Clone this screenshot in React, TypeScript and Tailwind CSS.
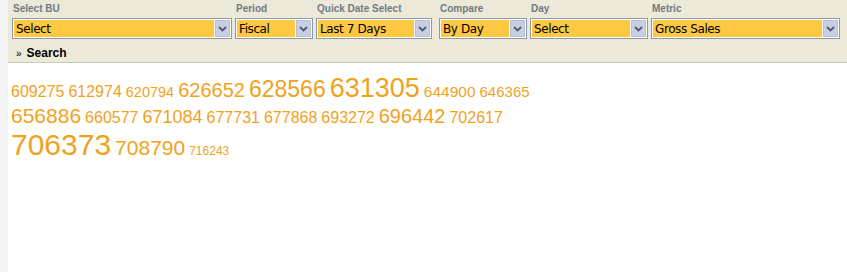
import React from "react";

type Field = { label: string; value: string; width: string; gap: string };

const fields: Field[] = [
  { label: "Select BU", value: "Select", width: "w-[220px]", gap: "ml-[4px]" },
  { label: "Period", value: "Fiscal", width: "w-[78px]", gap: "ml-[3px]" },
  { label: "Quick Date Select", value: "Last 7 Days", width: "w-[116px]", gap: "ml-[3px]" },
  { label: "Compare", value: "By Day", width: "w-[88px]", gap: "ml-[7px]" },
  { label: "Day", value: "Select", width: "w-[118px]", gap: "ml-[3px]" },
  { label: "Metric", value: "Gross Sales", width: "w-[189px]", gap: "ml-[3px]" },
];

const cloud: [string, string][][] = [
  [
    ["609275", "text-[16px]"],
    ["612974", "text-[16px]"],
    ["620794", "text-[14.5px]"],
    ["626652", "text-[20px]"],
    ["628566", "text-[23px]"],
    ["631305", "text-[27px]"],
    ["644900", "text-[15.5px]"],
    ["646365", "text-[15px]"],
  ],
  [
    ["656886", "text-[21px]"],
    ["660577", "text-[16px]"],
    ["671084", "text-[18px]"],
    ["677731", "text-[16px]"],
    ["677868", "text-[16px]"],
    ["693272", "text-[16px]"],
    ["696442", "text-[20px]"],
    ["702617", "text-[16px]"],
  ],
  [
    ["706373", "text-[30px]"],
    ["708790", "text-[21px]"],
    ["716243", "text-[12px]"],
  ],
];

function Chevron() {
  return (
    <svg width="9" height="6" viewBox="0 0 9 6">
      <path d="M1 1 L4.5 4.5 L8 1" fill="none" stroke="#4a5a78" strokeWidth="1.8" />
    </svg>
  );
}

function Combo({ value }: { value: string }) {
  return (
    <div className="flex h-[21px] border border-[#8e9aa8] bg-white p-[1px]">
      <div className="flex flex-1 items-center bg-[#ffc843] pl-[2px] text-[12px] leading-none tracking-[-0.4px] text-black [font-family:'DejaVu_Sans',sans-serif]">
        {value}
      </div>
      <div className="ml-[1px] flex w-[15px] items-center justify-center border border-[#b7bfd6] bg-[#c9cee2]">
        <Chevron />
      </div>
    </div>
  );
}

export default function App() {
  return (
    <div className="flex h-[272px] w-[847px] bg-[#f4f4f4]">
      <div className="w-[8px] shrink-0" />
      <div className="flex flex-1 flex-col">
        <div className="h-[63px] border-b border-[#c9c7bb] bg-[#ece9d8] pl-[4px] pt-[3px]">
          <div className="flex">
            {fields.map((f, i) => (
              <div key={f.label} className={`${f.width} ${i === 0 ? "" : f.gap} flex flex-col`}>
                <div className="h-[15px] pl-[1px] text-[10px] font-bold leading-[12px] text-[#707a86] [font-family:'Liberation_Sans',Arial,sans-serif]">
                  {f.label}
                </div>
                <Combo value={f.value} />
              </div>
            ))}
          </div>
          <div className="mt-[5px] flex items-center pl-[4px] [font-family:'Liberation_Sans',Arial,sans-serif]">
            <span className="mr-[5px] text-[10px] text-black">»</span>
            <span className="text-[12px] font-bold text-black">Search</span>
          </div>
        </div>
        <div className="flex-1 bg-white pl-[3px] pt-[10px] text-[#f0a21e] [font-family:'Liberation_Sans',Arial,sans-serif]">
          {cloud.map((row, r) => (
            <div key={r} className="leading-[1.15]">
              {row.map(([n, size]) => (
                <span key={n} className={`${size} mr-[4px]`}>
                  {n}
                </span>
              ))}
            </div>
          ))}
        </div>
      </div>
    </div>
  );
}
